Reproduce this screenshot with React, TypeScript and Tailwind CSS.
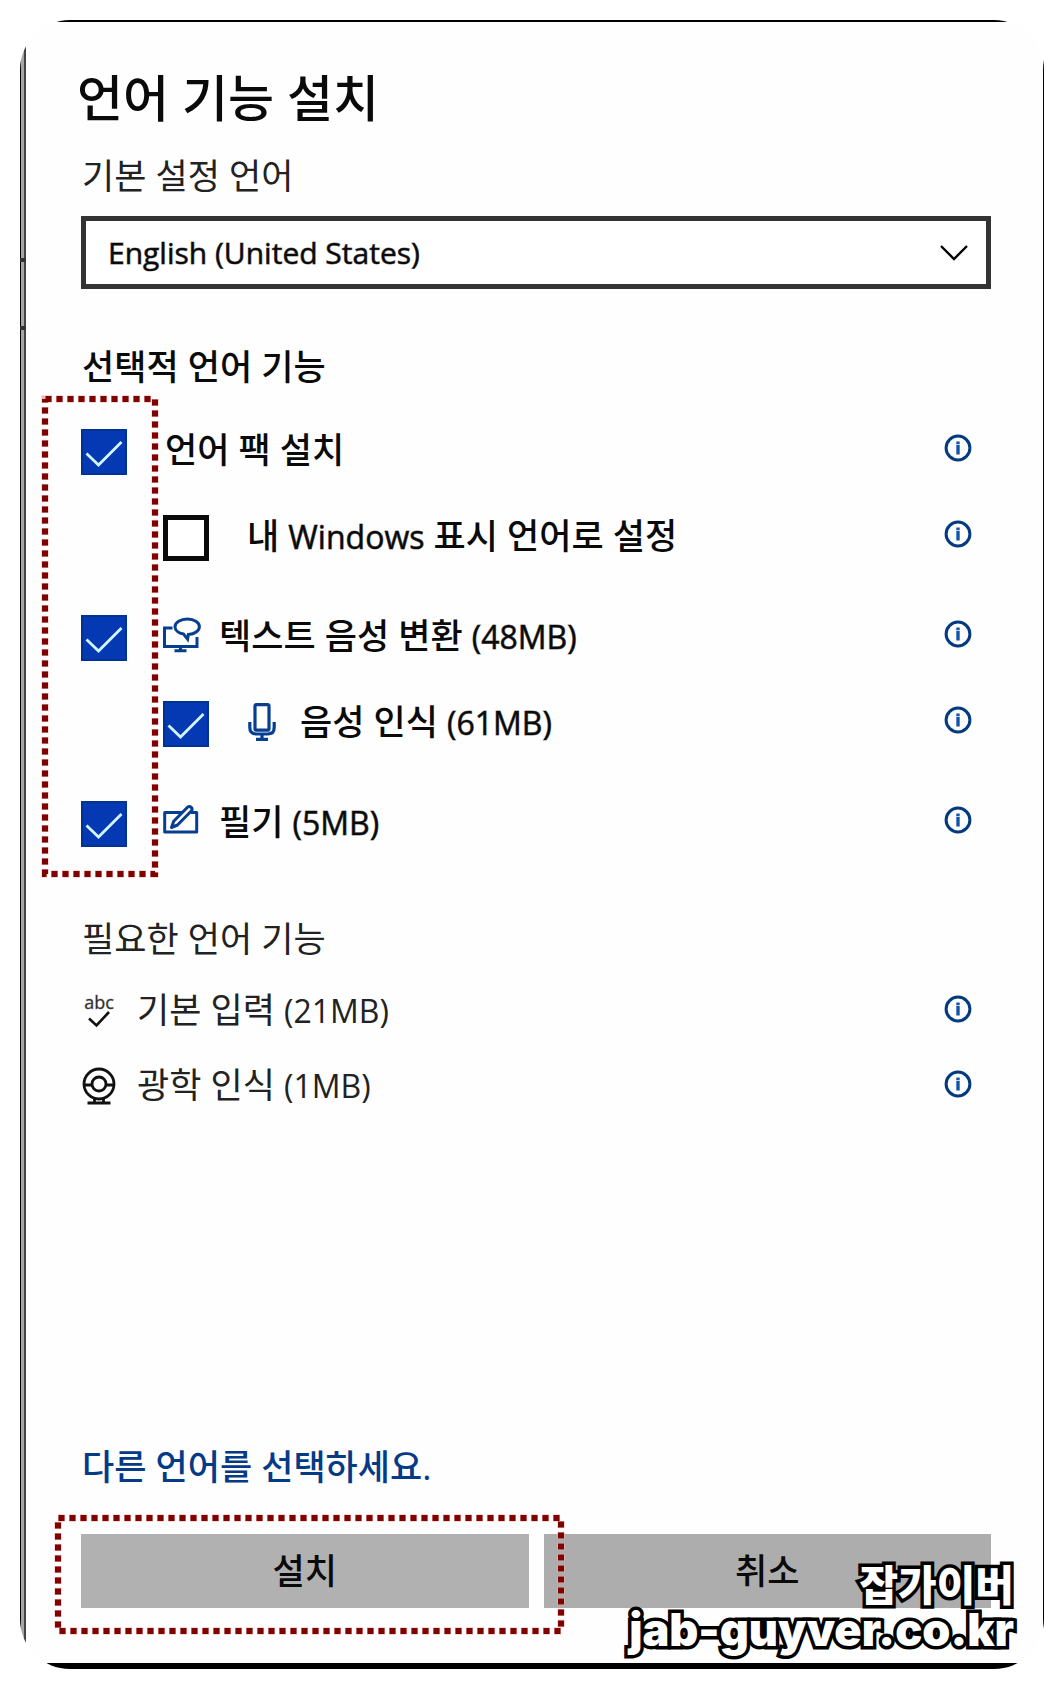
import React from "react";

const INK = "#0a0a0a";
const BLUE = "#063f90";

function InfoIcon() {
  return (
    <svg viewBox="0 0 28 28" className="size-7" fill="none" stroke="#043a80" aria-hidden="true">
      <circle cx="14" cy="14" r="11.900" strokeWidth="3" />
      <path d="M14 7.500v2.600M14 10.800v9.600" stroke="#1356a8" strokeWidth="3.400" />
    </svg>
  );
}

function SpeechIcon() {
  return (
    <svg viewBox="0 0 38 38" className="h-[38px] w-[38px]" fill="none" stroke={BLUE} strokeWidth="3" aria-hidden="true">
      <path d="M9.500 11H1.500v18.500h32.500V20" />
      <path d="M24.500 2C17.500 2 12 5.500 12 9.800c0 3.400 3.600 6.400 8.600 7.300l4 5 .8-4.600c6.200-.4 11-3.700 11-7.700C36.400 5.500 31 2 24.500 2z" />
      <path d="M17.500 30v4M11.500 33.800h12" />
    </svg>
  );
}

function MicIcon() {
  return (
    <svg viewBox="0 0 28 38" className="h-[38px] w-7" fill="none" stroke={BLUE} strokeWidth="3.200" aria-hidden="true">
      <rect x="7" y="1.700" width="14" height="25.500" rx="1.500" />
      <path d="M1.800 19v5.500q0 6.500 6.500 6.500h11.400q6.500 0 6.500-6.500V19" />
      <path d="M14 31v5M8 36.300h12" />
    </svg>
  );
}

function PenIcon() {
  return (
    <svg viewBox="0 0 36 34" className="h-[34px] w-9" fill="none" stroke={BLUE} strokeWidth="3" strokeLinejoin="round" aria-hidden="true">
      <path d="M20 7.500H1.700V27h32V7.500H28" />
      <path d="M8.500 22.500l2.200-6.200L24.500 2.200q2-1.400 3.700.2t.1 3.600L14.500 20z" />
    </svg>
  );
}

function AbcIcon() {
  return (
    <span
      className="flex w-[34px] flex-col items-center text-[18px] leading-4 text-[#222] [-webkit-text-stroke:1px_#55555560]"
      aria-hidden="true"
    >
      abc
      <svg viewBox="0 0 24 18" className="h-[18px] w-6" fill="none" stroke="#111" strokeWidth="2.600">
        <path d="M2 8.500l7.500 7L22 2" />
      </svg>
    </span>
  );
}

function CameraIcon() {
  return (
    <svg viewBox="0 0 34 38" className="h-[38px] w-[34px]" fill="none" stroke="#111" strokeWidth="2.800" aria-hidden="true">
      <circle cx="17" cy="17" r="15" />
      <circle cx="17" cy="17" r="7" />
      <path d="M2 18h8M24 18h8M12.500 31.500v4M21.500 31.500v4M5.500 36h23" />
    </svg>
  );
}

function DottedFrame({ className }: { className: string }) {
  return (
    <svg className={"pointer-events-none absolute overflow-visible " + className} aria-hidden="true">
      <rect width="100%" height="100%" fill="none" stroke="#f7b4ae" strokeWidth="7" strokeDasharray="7 4" />
      <rect width="100%" height="100%" fill="none" stroke="#7d0303" strokeWidth="6" strokeDasharray="6 5" strokeDashoffset="-0.5" />
    </svg>
  );
}

function InfoButton({ label, className }: { label: string; className: string }) {
  return (
    <button type="button" aria-label={label + " 정보"} className={"mr-[19px] ml-auto " + className}>
      <InfoIcon />
    </button>
  );
}

function Latin({ children }: { children: React.ReactNode }) {
  return <span className="text-[32px] [-webkit-text-stroke:1px_#0a0a0a90]">{children}</span>;
}

type OptionProps = {
  id: string;
  name: string;
  checked?: boolean;
  nested?: boolean;
  icon?: React.ReactNode;
  children: React.ReactNode;
  className: string;
  labelClass: string;
};

function Option({ id, name, checked, nested, icon, children, className, labelClass }: OptionProps) {
  return (
    <li className={"flex h-[46px] items-center " + (nested ? "pl-[82px] " : "") + className}>
      <span className="grid shrink-0">
        <input
          id={id}
          type="checkbox"
          defaultChecked={checked}
          className="peer col-start-1 row-start-1 size-[46px] appearance-none border-[5px] border-[#0a0a0a] bg-white checked:border-2 checked:border-[#003292] checked:bg-[#0539b4]"
        />
        <svg
          viewBox="0 0 46 46"
          className="pointer-events-none invisible col-start-1 row-start-1 size-[46px] peer-checked:visible"
          fill="none"
          stroke="#d3f5ff"
          strokeWidth="2.800"
          aria-hidden="true"
        >
          <path d="M5.500 24.500L17.500 36 40.500 13" />
        </svg>
      </span>
      <label htmlFor={id} className={"flex items-center pb-1 font-medium " + labelClass}>
        {icon}
        <span>{children}</span>
      </label>
      <InfoButton label={name} className="mb-2" />
    </li>
  );
}

export default function App() {
  return (
    <main
      className="flex min-h-screen flex-col bg-white p-5 text-[35px] leading-[48px]"
      style={{ fontFamily: '"Open Sans", "Noto Sans CJK KR", sans-serif', color: INK }}
    >
      <div className="relative flex grow overflow-hidden rounded-[50px]">
        <div className="flex grow border-t-2 border-r border-b-[6px] border-l border-black">
          <div className="flex grow border-l-[3px] border-[#a6a6a6]">
            <form
              className="flex grow flex-col border-l-2 border-[#444] bg-[#fefefe] pt-[46px] pr-[52px] pb-[55px] pl-[55px]"
              onSubmit={(e) => e.preventDefault()}
            >
              <h1 className="-ml-1 text-[50px] leading-[60px] font-medium">언어 기능 설치</h1>
              <label htmlFor="language" className="mt-6 pl-px text-[#222]">
                기본 설정 언어
              </label>
              <div className="mt-4 grid">
                <select
                  id="language"
                  className="col-start-1 row-start-1 h-[73px] appearance-none border-[5px] border-[#333] bg-white pl-[22px] text-[30px] [-webkit-text-stroke:1px_#0a0a0a90]"
                >
                  <option>English (United States)</option>
                </select>
                <svg
                  viewBox="0 0 28 16"
                  className="pointer-events-none col-start-1 row-start-1 mr-[23px] h-4 w-7 self-center justify-self-end"
                  fill="none"
                  stroke="#000"
                  strokeWidth="2.400"
                  aria-hidden="true"
                >
                  <path d="M1 1l13 13L27 1" />
                </svg>
              </div>

              <h2 className="mt-[54px] pl-px font-medium">선택적 언어 기능</h2>
              <ul className="relative mt-[38px]">
                <Option id="pack" name="언어 팩 설치" checked className="" labelClass="pl-[38px]">
                  언어 팩 설치
                </Option>
                <Option id="display" name="표시 언어" nested className="mt-10" labelClass="pl-[38px]">
                  내 <Latin>Windows</Latin> 표시 언어로 설정
                </Option>
                <Option id="tts" name="텍스트 음성 변환" checked icon={<SpeechIcon />} className="mt-[54px]" labelClass="gap-[18px] pl-9">
                  텍스트 음성 변환 <Latin>(48MB)</Latin>
                </Option>
                <Option id="speech" name="음성 인식" checked nested icon={<MicIcon />} className="mt-10" labelClass="gap-6 pl-[39px]">
                  음성 인식 <Latin>(61MB)</Latin>
                </Option>
                <Option id="ink" name="필기" checked icon={<PenIcon />} className="mt-[54px]" labelClass="gap-5 pl-9">
                  필기 <Latin>(5MB)</Latin>
                </Option>
                <DottedFrame className="-top-[30px] -left-9 h-[475px] w-[110px]" />
              </ul>

              <h2 className="mt-[68px] pl-px text-[#222]">필요한 언어 기능</h2>
              <ul className="pl-px text-[#222]">
                <li className="mt-[23px] flex items-center gap-[21px]">
                  <AbcIcon />
                  <span>
                    기본 입력 <span className="text-[32px]">(21MB)</span>
                  </span>
                  <InfoButton label="기본 입력" className="mb-1" />
                </li>
                <li className="mt-[26px] flex items-center gap-[21px]">
                  <CameraIcon />
                  <span>
                    광학 인식 <span className="text-[32px]">(1MB)</span>
                  </span>
                  <InfoButton label="광학 인식" className="mb-1" />
                </li>
              </ul>

              <div className="mt-auto pl-px">
                <a href="#languages" className="font-medium text-[#043a86]">
                  다른 언어를 선택하세요.
                </a>
              </div>
              <div className="relative mt-[43px] grid grid-cols-2 gap-[15px]">
                <button type="submit" className="h-[74px] bg-[#b1b1b1] font-medium">
                  설치
                </button>
                <button type="button" className="h-[74px] bg-[#adadad] font-medium">
                  취소
                </button>
                <DottedFrame className="-top-4 -left-[23px] h-[113px] w-[503px]" />
              </div>
            </form>
          </div>
        </div>
        {/* Notches on the window edge */}
        <div className="absolute top-[238px] left-0 flex flex-col gap-16" aria-hidden="true">
          <span className="h-1 w-[6px] bg-[#333]" />
          <span className="h-1 w-[6px] bg-[#333]" />
        </div>
        <div
          className="pointer-events-none absolute right-[30px] bottom-4 flex flex-col items-end font-black text-white [paint-order:stroke_fill] [-webkit-text-stroke:7px_black]"
          style={{ fontFamily: 'Inter, "Noto Sans CJK KR", sans-serif' }}
        >
          <p className="text-[42px] leading-[42px]">잡가이버</p>
          <p className="text-[45px] leading-[46px]">jab-guyver.co.kr</p>
        </div>
      </div>
    </main>
  );
}
